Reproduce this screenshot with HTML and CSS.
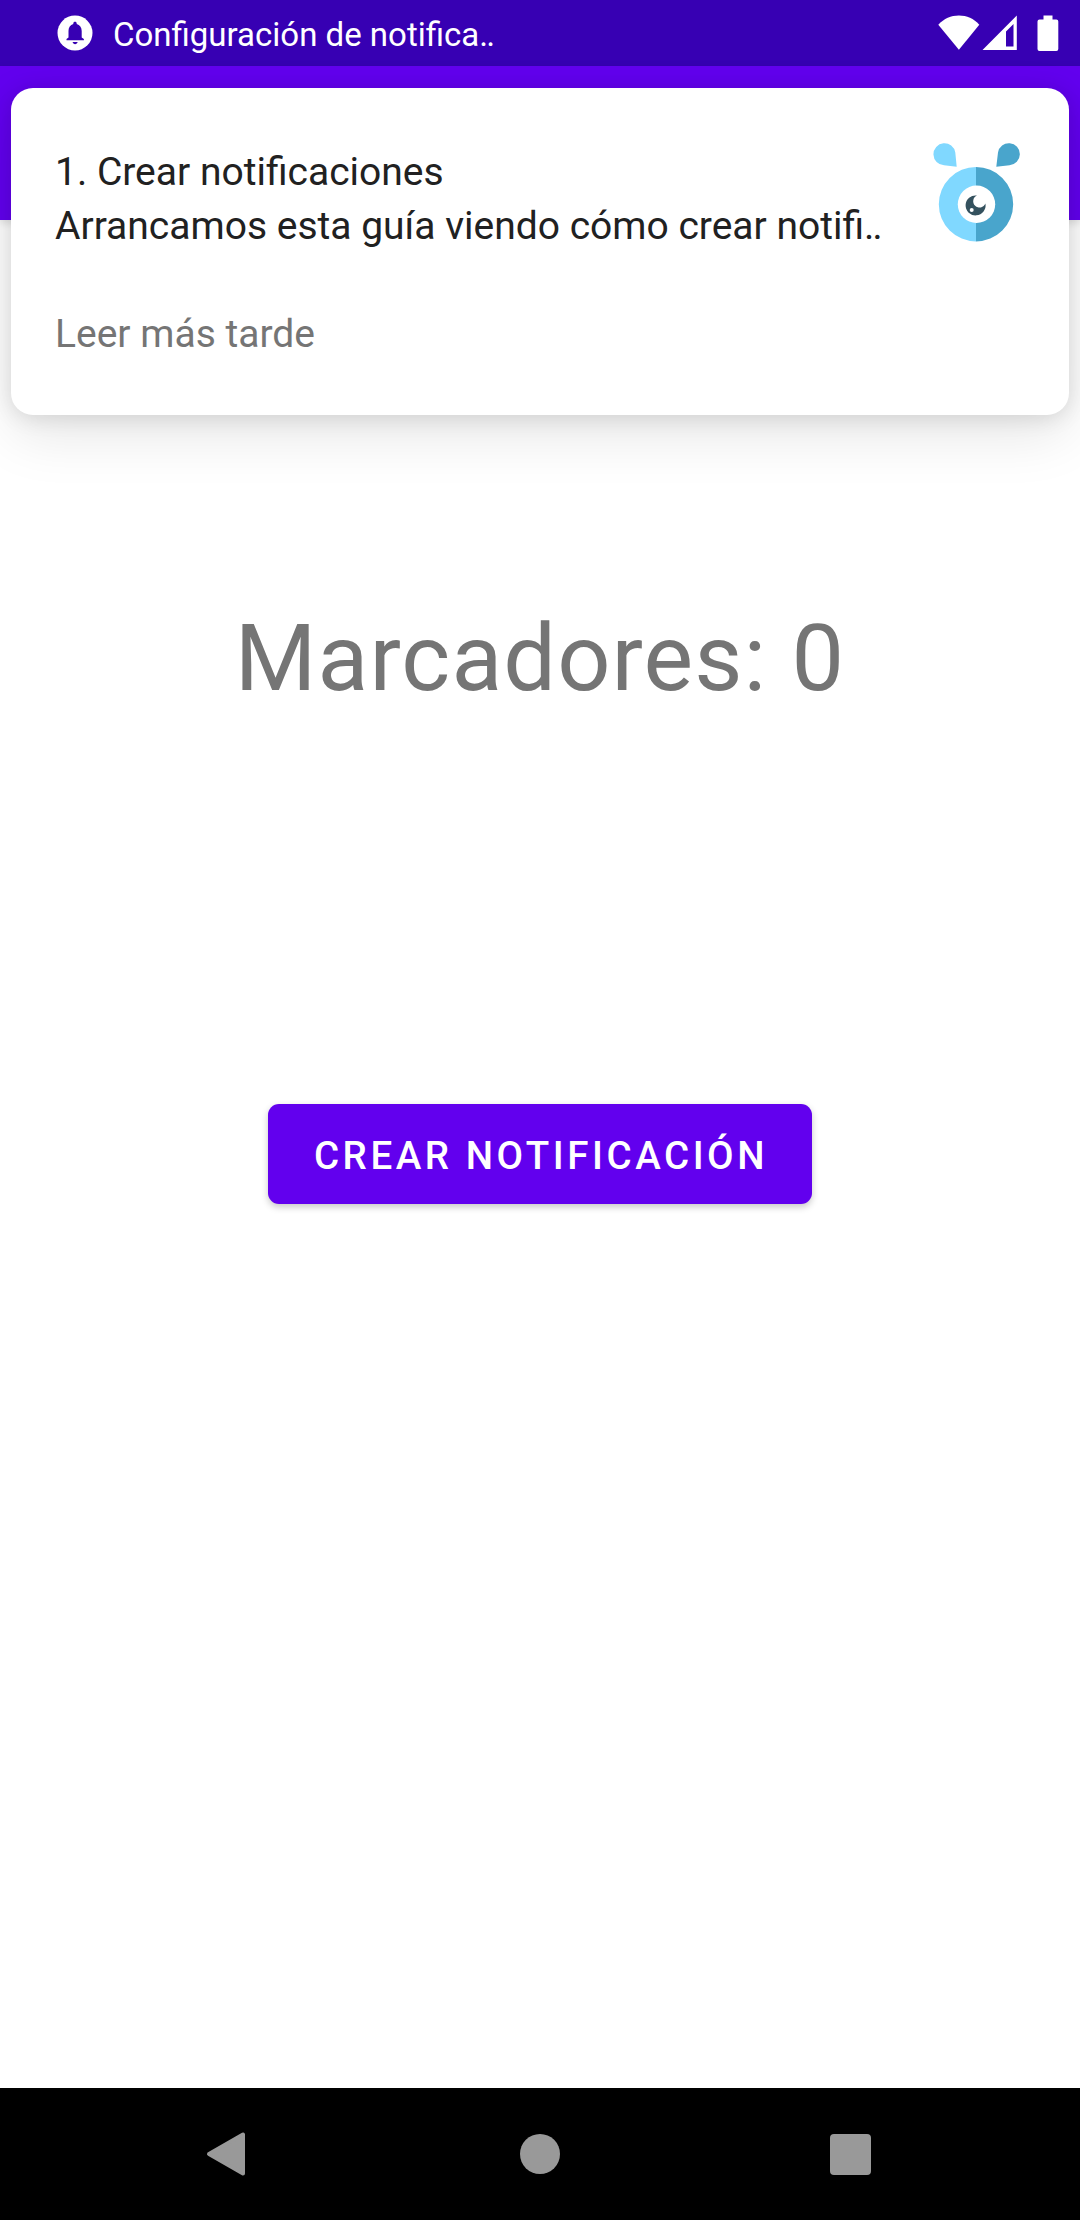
FILE: index.html
```html
<!DOCTYPE html>
<html lang="es">
<head>
    <meta charset="UTF-8">
    <meta name="viewport" content="width=device-width, initial-scale=1.0">
    <title>Notificaciones</title>
    <link rel="stylesheet" href="styles.css">
</head>
<body>
    <div class="screen">
        <!-- Status bar -->
        <header class="status-bar">
            <svg class="status-bell" width="36" height="36" viewBox="0 0 36 36">
                <circle cx="18" cy="18" r="17.5" fill="#fff"/>
                <path d="M18 6.800c-1 0-1.700.7-1.700 1.500v.7C13.200 9.900 11.500 12.500 11.500 15.900V22.500L9.500 24v1.200H26.900V24L24.700 22.500V15.900c0-3.400-1.900-6-5-6.900v-.7c0-.8-.7-1.500-1.700-1.500z" fill="#3700b3"/>
                <path d="M15.600 27h5c-.3 1.400-1.300 2.200-2.500 2.200s-2.200-.8-2.500-2.200z" fill="#3700b3"/>
            </svg>
            <span class="status-text">Configuración de notifica‥</span>
            <div class="status-icons">
                <svg class="icon-wifi" width="42" height="36" viewBox="0 0 42 36">
                    <path d="M.3 9.800C6 3.500 13 .5 20.900.5S35.800 3.500 41.300 9.800L20.900 34.700z" fill="#fff"/>
                </svg>
                <svg class="icon-signal" width="36" height="36" viewBox="0 0 36 36">
                    <path fill-rule="evenodd" d="M.5 35L34.800.5V35zM24 16.500V31.500h7.500V9z" fill="#fff"/>
                </svg>
                <svg class="icon-battery" width="22" height="37" viewBox="0 0 22 37">
                    <path d="M6.500.500h9V4.500h3.800a2 2 0 0 1 2 2V34a2 2 0 0 1-2 2H2.500a2 2 0 0 1-2-2V6.500a2 2 0 0 1 2-2h4z" fill="#fff"/>
                </svg>
            </div>
        </header>

        <div class="app-bar"></div>

        <!-- Heads-up notification -->
        <section class="notification">
            <div class="notification-text">
                <p class="notification-title">1. Crear notificaciones</p>
                <p class="notification-body">Arrancamos esta guía viendo cómo crear notifi‥</p>
                <p class="notification-action">Leer más tarde</p>
            </div>
            <svg class="notification-image" width="88" height="100" viewBox="0 0 88 100">
                <path d="M24.700 24.700L12 23.200A11 11 0 1 1 23.300 10.500z" fill="#80d8ff"/>
                <path d="M64.300 24.700L77.500 23.200A11 11 0 1 0 66 10.500z" fill="#49a5cc"/>
                <path d="M44 25a37.200 37.200 0 0 0 0 74.400z" fill="#80d8ff"/>
                <path d="M44 25a37.200 37.200 0 0 1 0 74.400z" fill="#49a5cc"/>
                <circle cx="44.500" cy="62.300" r="18.700" fill="#fff"/>
                <path d="M45 53.500A10 10 0 1 0 53.400 61.500A6.300 6.300 0 1 1 45 53.500z" fill="#34515e"/>
                <circle cx="39.700" cy="68" r="2" fill="#fff"/>
            </svg>
        </section>

        <main class="content">
            <h1 class="counter">Marcadores: 0</h1>
            <button class="create-button">Crear notificación</button>
        </main>

        <!-- Navigation bar -->
        <nav class="nav-bar">
            <svg width="46" height="48" viewBox="0 0 46 48">
                <path d="M39 4.500V43.500L5 24z" fill="#999" stroke="#999" stroke-width="4" stroke-linejoin="round"/>
            </svg>
            <span class="nav-home"></span>
            <span class="nav-recent"></span>
        </nav>
    </div>
</body>
</html>
```

FILE: styles.css
```css
body {
    margin: 0;
    padding: 0;
    font-family: Roboto, sans-serif;
    background-color: #fff;
}

p, h1 {
    margin: 0;
    font-weight: 400;
}

svg {
    display: block;
    flex: none;
}

.screen {
    position: relative;
    display: flex;
    flex-direction: column;
    height: 2220px;
    overflow: hidden;
}

/* Status bar */
.status-bar {
    display: flex;
    align-items: center;
    height: 66px;
    padding: 0 21px 0 57px;
    box-sizing: border-box;
    background-color: #3700b3;
    color: #fff;
}

.status-text {
    margin-left: 20px;
    padding-top: 4px;
    font-size: 33px;
    line-height: 38px;
    white-space: nowrap;
}

.status-icons {
    display: flex;
    align-items: center;
    margin-left: auto;
}

.icon-signal {
    margin-left: 2px;
}

.icon-battery {
    margin-left: 19px;
}

.app-bar {
    height: 154px;
    background-color: #6200ee;
    box-shadow: 0 3px 8px rgba(0, 0, 0, 0.12);
}

/* Heads-up card, floats over the app */
.notification {
    position: absolute;
    top: 88px;
    left: 11px;
    right: 11px;
    height: 327px;
    display: flex;
    justify-content: space-between;
    padding: 54px 49px 0 44px;
    box-sizing: border-box;
    background-color: #fff;
    border-radius: 22px;
    box-shadow: 0 20px 56px rgba(0, 0, 0, 0.1), 0 2px 22px rgba(0, 0, 0, 0.12);
}

.notification-text {
    padding-top: 3px;
    font-size: 39px;
    line-height: 54px;
    color: #212121;
    white-space: nowrap;
}

.notification-action {
    margin-top: 54px;
    color: #757575;
}

/* Main content */
.content {
    flex: 1;
    display: flex;
    flex-direction: column;
    align-items: center;
}

.counter {
    margin-top: 383px;
    font-size: 93.5px;
    line-height: 110px;
    letter-spacing: 1.1px;
    color: #757575;
}

.create-button {
    margin-top: 391px;
    width: 544px;
    height: 100px;
    padding: 2px 0 0 2px;
    border: none;
    border-radius: 11px;
    background-color: #6200ee;
    color: #fff;
    font-family: inherit;
    font-size: 38.5px;
    font-weight: 500;
    letter-spacing: 3.56px;
    text-transform: uppercase;
    box-shadow: 0 3px 7px rgba(0, 0, 0, 0.22);
}

/* Navigation bar */
.nav-bar {
    display: flex;
    align-items: center;
    justify-content: space-between;
    height: 132px;
    padding: 0 209px 0 204px;
    background-color: #000;
}

.nav-home {
    width: 40px;
    height: 40px;
    border-radius: 50%;
    background-color: #999;
}

.nav-recent {
    width: 41px;
    height: 41px;
    border-radius: 4px;
    background-color: #999;
}
```
